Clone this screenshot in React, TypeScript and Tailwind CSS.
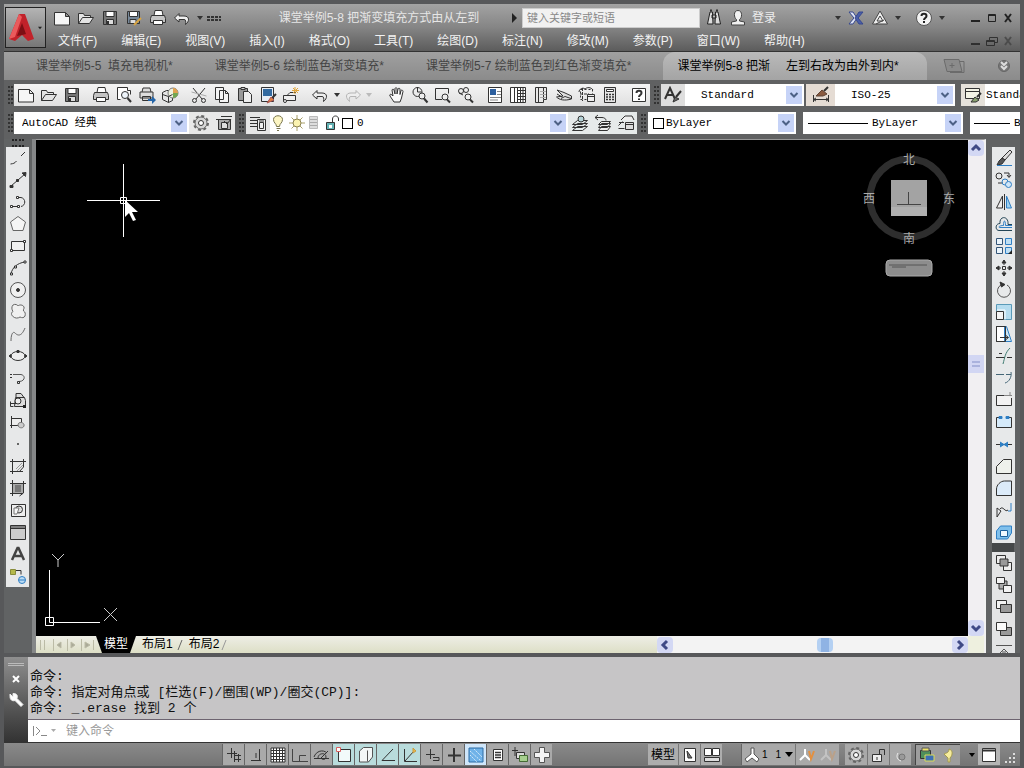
import type { ReactNode } from "react";

const uiFont = "font-['Liberation_Sans','Noto_Sans_CJK_SC',sans-serif]";
const monoFont = "font-['Liberation_Mono','Noto_Sans_CJK_SC',monospace]";

const BLUE = "#2f7fc4";

// every icon is drawn on an 18 x 18 grid
const icons: Record<string, ReactNode> = {
  new: <path d="M1.5 3.5h11l4 4v8.5h-15zM12.5 3.5v4h4" fill="#f6f6f6" />,
  open: <path d="M1.5 14.5v-10h5l1 2h6v2M1.5 14.5l4-6h11l-4 6z" fill="#e4e4e4" />,
  save: (
    <>
      <path d="M2.5 2.5h13v13h-13z" fill="#777" />
      <path d="M5 2.5h8v5H5z" fill="#fff" />
      <path d="M5.5 10.5h7v5h-7z" fill="#ddd" />
      <path d="M7 12v3" strokeWidth="2" />
    </>
  ),
  saveAs: (
    <>
      <path d="M2.5 2.5h12v12h-12z" fill="#789" />
      <path d="M4.5 2.5h8v5h-8z" fill="#fff" />
      <path d="M5 10.5h6v4H5z" fill="#ddd" />
      <path d="M9 16l7-7" stroke="#d9a441" strokeWidth="2" />
    </>
  ),
  print: (
    <>
      <path d="M5 6.5l1-5h7l1 5" fill="#fff" />
      <path d="M2.5 6.5h13l1 3v4h-15v-4z" fill="#c4c4c4" />
      <path d="M4.5 11.5h9v4h-9z" fill="#fff" />
    </>
  ),
  preview: (
    <>
      <path d="M12.5 4.5v-3h-10v12h3M12.5 4.5h3v4" fill="#fff" />
      <circle cx="10" cy="9" r="3.5" fill="#eef4fa" />
      <path d="M12.5 12l3.5 4" strokeWidth="2" />
    </>
  ),
  plot: (
    <>
      <path d="M4 6l1-4h7l1 4M2 6h13v6H2zM4.5 10.5h8v4h-8z" fill="#ddd" />
      <path d="M10 13h4v-3l4 4-4 4v-3h-4z" fill="#2465a8" stroke="none" />
    </>
  ),
  publish: (
    <>
      <path d="M1.5 6.5l4-2h6v10l-4 2-6-3z" fill="#e7e7e7" />
      <circle cx="12" cy="7" r="5" fill="#edf2e0" stroke="#777" />
      <path d="M12 2a5 5 0 0 1 5 5h-5z" fill="#e0a24f" stroke="none" />
      <path d="M17 7a5 5 0 0 1-5 5V7z" fill="#72a850" stroke="none" />
      <path d="M1.5 8.5l6 2v6M7.5 10.5l4-2" />
    </>
  ),
  cut: (
    <>
      <path d="M3 2l9 11M15 2L6 13" />
      <circle cx="4.5" cy="14.5" r="2" />
      <circle cx="13.5" cy="14.5" r="2" />
      <path d="M1.5 6l15 4" stroke="#aaa" />
    </>
  ),
  copy: <path d="M2.5 1.5h8v12h-8zM6.5 4.5h6l3 3v9h-9zM12.5 4.5v3h3" fill="#f4f4f4" />,
  paste: (
    <>
      <path d="M2.5 2.5h9v12h-9z" fill="#999" />
      <path d="M5 1.5h4v2H5z" fill="#ccc" />
      <path d="M7.5 5.5h5l3 3v8h-8z" fill="#eee" />
    </>
  ),
  match: (
    <>
      <path d="M2.5 1.5h12v14h-12z" fill="#e8eef5" />
      <path d="M4 3h9v7H4z" fill="#336aa0" stroke="none" />
      <path d="M17 8l-4 4" strokeWidth="2" />
      <path d="M8 17l4-6 3 3z" fill="#e0823f" stroke="#a55" />
    </>
  ),
  block: (
    <>
      <path d="M1.5 9.5h12v5h-12zM5 9.5l3-3h6" fill="#eee" />
      <path d="M13 1v7M10 4.5h7M11 2l5 5M16 2l-5 5" stroke="#e0a53a" />
      <circle cx="3" cy="15" r="1.5" fill="#fff" />
    </>
  ),
  undo: <path d="M6 4.5L1.5 9 6 13v-2.5h5c2 0 2 2 1.5 5 4-3 4.5-8.5-1.5-8.5H6z" fill="#eee" />,
  redo: <path d="M12 4.5L16.5 9 12 13v-2.5H7c-2 0-2 2-1.5 5C1.5 12 1 7 7 7h5z" fill="#eee" stroke="#b5b5b5" />,
  pan: (
    <path
      d="M6 16L2 10c-1-2 1-2 2-1l1 1-1-6c0-1 2-1 2 0l1 4V2.5c0-1 2-1 2 0V8l1-5c0-1 2-1 2 0v5.5l1-4c1-1 2 0 2 1L13.5 12 12 16z"
      fill="#fafafa"
    />
  ),
  zoomRt: (
    <>
      <circle cx="6.5" cy="6" r="4.5" />
      <path d="M6.5 1v5h4" />
      <circle cx="11" cy="10" r="3" fill="#eee" />
      <path d="M13 12.5l3.5 4" strokeWidth="2" />
    </>
  ),
  zoomWin: (
    <>
      <path d="M8 13.5H1.5v-11h13v5" />
      <circle cx="11" cy="11" r="3" fill="#eee" />
      <path d="M13 13.5l3 3" strokeWidth="2" />
    </>
  ),
  zoomPrev: (
    <>
      <circle cx="4" cy="5" r="2.5" />
      <circle cx="9" cy="4" r="2.5" />
      <path d="M4 8l-2-1M4 8l2 1" />
      <circle cx="11" cy="11" r="3" fill="#eee" />
      <path d="M13 13.5l3 3" strokeWidth="2" />
    </>
  ),
  props: (
    <>
      <path d="M2.5 1.5h13v15h-13z" fill="#fff" />
      <path d="M4 3h6v6H4z" fill="#2d5f9e" stroke="none" />
      <path d="M11 5.5h4M11 8.5h4M4 11.5h11M4 14h8" stroke="#888" />
    </>
  ),
  design: (
    <>
      <path d="M1.5 1.5h15v15h-15z" fill="#fff" />
      <path d="M5.5 1.5v15M8 4.5h8M8 7.5h8M8 10.5h8M8 13.5h8M8.5 2v14M11.5 2v14M14 2v14" />
    </>
  ),
  palettes: (
    <>
      <path d="M3.5 1.5h11v12h-3v3h-8z" fill="#e9e9e9" />
      <path d="M6.500 2v14M11.5 2v11" />
      <path d="M8 5.5h6M8 8.5h6M8 11.5h6" stroke="#aaa" />
    </>
  ),
  sheet: <path d="M1.5 11c3 3 8 4 15 2v-3L9 6.5 2 4l6 6zM6 12.5l4-2 6 2M2 8l5 3" fill="#ddd" />,
  markup: (
    <>
      <path d="M2.5 3.5h12v10h-12z" strokeDasharray="2 2" />
      <path d="M1 6c0-3 4-5 6-3 2-2 6-2 8 1" />
      <path d="M4.5 2v13M2 8h9" strokeDasharray="3 1" />
      <path d="M9.5 8.5h7v7h-7z" fill="#eee" />
      <path d="M9 10.5h7" />
    </>
  ),
  calc: (
    <>
      <path d="M3.5 1.5h11v15h-11z" fill="#e6e6e6" />
      <path d="M5.5 3.5h7v2h-7z" fill="#fff" />
      <path d="M5 8.5h8M5 11h8M5 13.5h8" strokeDasharray="2 1" strokeWidth="1.5" />
    </>
  ),
  help: (
    <>
      <path d="M2.5 2.5h13v13h-13z" fill="#fff" />
      <path d="M6.5 7c0-3 5-3 5 0 0 2-2.5 2-2.5 4M9 12.5v1.5" strokeWidth="2" />
    </>
  ),
  gear: (
    <>
      <circle cx="9" cy="9" r="7" stroke="#666" strokeWidth="2" strokeDasharray="3 2.5" />
      <circle cx="9" cy="9" r="6" fill="#d6d6d6" stroke="#666" />
      <circle cx="9" cy="9" r="2.5" fill="#fff" />
    </>
  ),
  wsSave: (
    <>
      <path d="M3.5 5.5h12v10h-12z" fill="#aaa" />
      <path d="M1 5.5h4M6 2.5h11M6.5 8.5h6v6h-6z" fill="#ddd" />
      <path d="M9 7l3 3 4-5" />
    </>
  ),
  layerProps: (
    <>
      <path d="M1 3.5h10M1 6.5h7M1 9.5h7M1 12.5h7" />
      <path d="M8.5 5.5h8v11h-8z" fill="#eee" />
      <path d="M10.5 8.5h4v6h-4zM10 7h5" />
    </>
  ),
  bulb: <path d="M6.5 12.5c0-3-3-3.500-3-7 0-5 9-5 9 0 0 3.5-3 4-3 7zM6.5 14.5h4M7 16.5h2" fill="#fdf6c4" stroke="#77734e" />,
  sun: (
    <>
      <path d="M9 1v16M1 9h16M3.5 3.5l11 11M14.5 3.5l-11 11" stroke="#a9a06a" />
      <circle cx="9" cy="9" r="4" fill="#fbf3b0" stroke="#8a8150" />
    </>
  ),
  freeze: (
    <>
      <path d="M3.5 2.5h8v12h-8z" fill="#ddd" stroke="#bbb" />
      <path d="M4 5.5h7M4 8.5h7M4 11.5h7" stroke="#aaa" />
    </>
  ),
  unlock: (
    <>
      <path d="M2.5 8.5h8v7h-8z" fill="#62b2b4" />
      <path d="M8.5 8V5c0-4 6-4 6 0v2" />
      <path d="M5 11h3v3H5z" fill="#fff" stroke="none" />
    </>
  ),
  layers: (
    <>
      <path d="M1.5 16.5l5-4h10l-5 4zM1.5 13.5l5-4h10l-5 4zM1.5 10.5l5-4h10l-5 4z" fill="#e5ecec" />
      <circle cx="10" cy="5" r="3" fill="#b5d4d8" />
    </>
  ),
  layerPrev: (
    <>
      <path d="M4.5 16.5l3-4h9l-3 4zM4.5 13.5l3-4h9l-3 4zM4.5 10.500l3-3h9l-3 3z" fill="#eee" />
      <path d="M1 3.5h7c2 0 4 1 4 3M4 1L1 3.5 4 6" />
    </>
  ),
  layerState: (
    <>
      <path d="M1.5 11.5l4-4M1.500 14.5h6M4 6l4-4h7l2 4M2 8.5h5" fill="#eee" />
      <path d="M8.5 8.5h8v7h-8zM8.5 10.5h8" fill="#ddd" />
    </>
  ),
  textStyle: (
    <>
      <path d="M1 13L6 2l5 11M3 9h6" strokeWidth="2" />
      <path d="M17 5l-5 6" strokeWidth="2" />
      <path d="M9 16l2-5 4 2z" fill="#666" />
    </>
  ),
  dimStyle: (
    <>
      <path d="M1.5 9v7M16.5 9v7M2 13.5h14M4 12l-2.5 1.5L4 15M14 12l2.5 1.5L14 15" />
      <path d="M16 1l-4 4" strokeWidth="2" />
      <path d="M4 10l6-6 5 4-4 2z" fill="#8a5a40" stroke="#5e4436" />
    </>
  ),
  tableStyle: (
    <>
      <path d="M1.5 2.5h14v10h-14zM2 5.5h13" fill="#f4f4e6" />
      <path d="M17 7l-4 4" strokeWidth="2" />
      <path d="M7 16l4-5 4 3-3 2z" fill="#89a06f" />
    </>
  ),
  // draw
  line: <path d="M1.5 15c3-.5 4-.5 6-3M12 7l4-4" />,
  xline: (
    <>
      <path d="M2 15L16 3" />
      <path d="M1 14.5h3v2H1zM13 2l4-.5-.5 4zM7.5 8.5h2v2h-2z" fill="#333" />
    </>
  ),
  pline: (
    <>
      <path d="M2 13.5h7M9 4.5h3c5 1 5 8 0 9" />
      <path d="M1.5 12.5h2v2h-2zM8.5 12.5h2v2h-2zM7.5 3.5h2v2h-2z" fill="#fff" />
    </>
  ),
  polygon: <path d="M9 1.5l7.5 5.5-2.5 8.5H4L1.5 7z" fill="#f5f5f5" stroke="#666" />,
  rect: (
    <>
      <path d="M2.5 4.5h13v9h-13z" fill="#f0f0f0" />
      <path d="M14.5 3.5h2v2h-2zM1.5 12.5h2v2h-2z" fill="#fff" />
    </>
  ),
  arc: (
    <>
      <path d="M2 15C3 9 8 4 16 3" />
      <path d="M1.5 14h2v2h-2zM5.5 7h2v2h-2zM15 2h2v2h-2z" fill="#fff" />
    </>
  ),
  circle: (
    <>
      <circle cx="9" cy="9" r="7.5" fill="#f0f0f0" stroke="#555" />
      <circle cx="9" cy="9" r="1.5" fill="#333" />
    </>
  ),
  revcloud: (
    <path
      d="M4 2c2-1.500 5 0 5 1 1-1.500 5-1.500 6 1 .5 2-1 2-.5 4 2 1 2 3 1.500 5-1 2-3 2-5 1-2 1.500-5 1.500-7-.5-2-1.500-2-4 0-5-1.500-2-1.500-5 0-6.500z"
      fill="#f0f0f0"
      stroke="#666"
    />
  ),
  spline: <path d="M2 16C2 9 4 6 6 8s6 5 10-5" stroke="#666" />,
  ellipse: (
    <>
      <ellipse cx="9" cy="9" rx="7" ry="4.5" fill="#eee" />
      <path d="M0 9l2-1.5v3zM18 9l-2-1.5v3zM8 3.5h2v2H8z" fill="#333" />
    </>
  ),
  ellArc: (
    <>
      <path d="M4 5.5h8c5 1 4 7-2 7" stroke="#555" />
      <path d="M1 5.5h2M1 8.5h2M8.5 12.5h2v2h-2z" />
    </>
  ),
  insert: (
    <>
      <path d="M6.5 6.5h9l1 3v6h-11zM7 6V2.500h5l3 4" fill="#ddd" />
      <circle cx="9" cy="10" r="3" fill="#eee" />
      <path d="M1 12.5h6M1.5 10.5v5h3" />
      <path d="M14 14h3v3h-3z" fill="#222" stroke="none" />
    </>
  ),
  mkBlock: (
    <>
      <path d="M2.5 5.5h10v7h-10zM1 12.5h13M2.5 3v12" fill="#eee" />
      <path d="M9 12c0-4 7-3 6 1-1 3-6 2-6-1z" fill="#ccc" stroke="#777" />
    </>
  ),
  point: <path d="M9 8v2M8 9h2" strokeWidth="2" stroke="#666" />,
  hatch: (
    <>
      <path d="M1 4.5h16M1 14.5h13M3.5 2v15M14.5 2v8l-4 4.5" />
      <path d="M7 12l6-6M8 14l6-6" stroke="#999" />
    </>
  ),
  gradient: (
    <>
      <path d="M4 4h10v10H4z" fill="#aaa" stroke="none" />
      <path d="M6 6h6v7H6z" fill="#777" stroke="none" />
      <path d="M1 4.5h16M1 14.5h13M3.5 1v16M14.5 2v12l-4 3" />
    </>
  ),
  region: (
    <>
      <path d="M2.5 3.5h14v12h-14z" fill="#eee" />
      <circle cx="10" cy="8.5" r="3.5" fill="#ddd" />
      <path d="M5 13V7h5l-2 6z" fill="#f8f8f8" stroke="#777" />
    </>
  ),
  table: <path d="M1.5 2.5h15v14h-15zM1.5 5.5h15M2 4h14" fill="#ccc" />,
  mtext: <path d="M3 15L8.5 3h1L15 15M5 11h8" strokeWidth="2.5" stroke="#444" />,
  addSel: (
    <>
      <path d="M1.5 2.5h5v5h-5z" fill="#b5b94c" stroke="#888c3c" />
      <path d="M7 3.5h5v4" />
      <circle cx="13" cy="13" r="3.5" fill="#bcdcf5" stroke={BLUE} />
      <path d="M10 13h6" stroke={BLUE} />
    </>
  ),
  // modify
  erase: (
    <>
      <path d="M15 1l2 2-7 8-3-2z" fill="#ddd" />
      <path d="M7 9l3 2-3 4-5 1 2-4z" fill="#555" />
      <path d="M2 16.5h15" stroke={BLUE} />
    </>
  ),
  copyObj: (
    <>
      <circle cx="4" cy="5" r="3" />
      <path d="M9 2h5v4M12 4l2 2.5L16 4M3 12h5" />
      <circle cx="10" cy="11" r="3" stroke={BLUE} />
      <circle cx="13.5" cy="13.5" r="3" fill="#cfe6f8" stroke={BLUE} />
    </>
  ),
  mirror: (
    <>
      <path d="M7.5 3v12H1.5z" fill="#eee" />
      <path d="M11.5 3v12h5z" fill="#9ed0ee" stroke={BLUE} />
      <path d="M9.5 1v16" />
    </>
  ),
  offset: (
    <>
      <path d="M17 9.5h-4c1-9-9-9-8-1-5 0-5 7-1 7h13" stroke="#245" />
      <path d="M17 12.5H4.5c-1 0-1-2 4-2 0-6 2-6 2 0H17" stroke={BLUE} />
    </>
  ),
  array: (
    <>
      <path d="M1.5 1.5h6v6h-6zM1.5 10.5h6v6h-6z" fill="#eaf4fb" stroke="#357" />
      <path d="M10.5 1.5h6v6h-6zM10.5 10.5h6v6h-6z" fill="#bfe0f5" stroke={BLUE} />
      <path d="M17 13v4h-4z" fill="#222" stroke="none" />
    </>
  ),
  move: (
    <>
      <path d="M9 1v5M9 12v5M1 9h5M12 9h5M7.5 7.5h3v3h-3z" />
      <path d="M9 1L7 4h4zM9 17l-2-3h4zM1 9l3-2v4zM17 9l-3-2v4z" fill="#333" />
    </>
  ),
  rotate: (
    <>
      <path d="M6 4a6.5 6.5 0 1 0 6 0" stroke="#555" />
      <path d="M5 1l5 2.5L6.5 6z" fill="#333" />
    </>
  ),
  scale: (
    <>
      <path d="M1.5 1.5h15v15h-15z" fill="#b5dcef" stroke="#5a9ab8" />
      <path d="M1.5 8.5h7v8h-7z" fill="#f4f4f4" />
      <path d="M10 16.500V7H2" stroke="#fff" />
    </>
  ),
  stretch: (
    <>
      <path d="M1.5 1.5h8v15h-8z" fill="#fff" />
      <path d="M9.5 1.5h2l5 15h-7z" fill="#cde7f6" stroke={BLUE} />
      <path d="M1.5 1.500h9v15h-9z" />
      <path d="M5 12.5h8M11 10.5l2.5 2-2.5 2" />
    </>
  ),
  trim: (
    <>
      <path d="M1 10.5h9M12 10.5h5M4 6.5h3" />
      <path d="M15 1C10 6 10 10 8 17" stroke="#3f7c72" />
    </>
  ),
  extend: <path d="M1 5.5h8M11 5.5h5M16 3c1 5-2 10-6 11" stroke="#467" />,
  breakPt: (
    <>
      <path d="M13 4.5H1.5v10h15V7" fill="#f2f2f2" />
      <path d="M9 4.5h8M15 1v4" stroke="#888" />
    </>
  ),
  breakObj: (
    <>
      <path d="M5 4.500H1.5v10h15v-10H13" fill="#d5eafa" />
      <path d="M4 3.5h3v2H4zM11 3.5h3v2h-3z" fill={BLUE} stroke={BLUE} />
    </>
  ),
  join: (
    <>
      <path d="M1 9.5h16" />
      <path d="M5 7l4 2.5L5 12M13 7L9 9.500l4 2.500" fill={BLUE} stroke={BLUE} />
    </>
  ),
  chamfer: <path d="M1.5 16.5V9.5l7-7h8v14z" fill="#eef1ec" />,
  fillet: <path d="M1.5 16.5V10c0-4 4-8 8-8h7v14.5z" fill="#dcebf9" />,
  blend: (
    <>
      <path d="M2 16V7l4 3zM5 8c3-4 5 4 8 1" />
      <path d="M16 2v8h-3" stroke={BLUE} />
    </>
  ),
  explode: (
    <>
      <path d="M1.5 8l4-5h11v7l-4 6h-11z" fill="#7fc0ec" stroke={BLUE} />
      <path d="M5.5 7.5h7v6h-7z" fill="#f0f8ff" stroke="#1c5f9c" />
    </>
  ),
  front: (
    <>
      <path d="M1.5 1.5h9v8h-9zM8.5 8.5h8v8h-8z" fill="#eee" />
      <path d="M5 5h8v7H5z" fill="#999" />
    </>
  ),
  back: (
    <>
      <path d="M4 5h8v8H4z" fill="#aaa" />
      <path d="M1.5 1.5h8v6h-8zM8.5 9.5h8v7h-8z" fill="#f3f3f3" />
    </>
  ),
  above: (
    <>
      <path d="M1.5 2.5h10v8h-10z" fill="#f3f3f3" />
      <path d="M5.500 6.500h11v8h-11z" fill="#999" />
    </>
  ),
  under: (
    <>
      <path d="M5.500 7.500h11v8h-11z" fill="#999" />
      <path d="M1.5 2.5h10v8h-10z" fill="#fbfbfb" />
    </>
  ),
  textFront: <path d="M1 3.5h16M4 12l5-5 5 5M7 10h4" stroke="#555" />,
  // status
  snap: <path d="M6.5 2v10M2 7.5h10M10 9.5h6M9.5 5v11M9 13.5h7M13.5 8v8" />,
  infer: <path d="M12.5 3v11M4 14.5h10M9 7v5" />,
  grid: (
    <>
      <path d="M2 2h14v14H2z" fill="#fff" />
      <path d="M2 4.5h14M2 7.5h14M2 10.5h14M2 13.5h14M4.5 2v14M7.5 2v14M10.5 2v14M13.5 2v14" />
    </>
  ),
  ortho: <path d="M1.5 3v12.5H17M8.5 15V9.5H15" stroke="#444" />,
  polar: (
    <>
      <path d="M1 11c2-6 9-8 13-4M5 12c0-5 8-6 8-1 0 3-4 3-5 1l7-7" />
      <path d="M1 12.5h15" />
    </>
  ),
  osnap: (
    <>
      <path d="M3.5 3.5h12v12h-12z" fill="#f2fafa" />
      <path d="M1.5 1.5h4v4h-4z" fill="#fff" stroke="#d96060" />
    </>
  ),
  osnap3d: <path d="M2.5 5l4-3.5h9V11l-4 5h-9zM11.500 16l-1-1V4.500" fill="#f4f8f8" stroke="#555" />,
  otrack: <path d="M14 3L3 14.5h13" />,
  ducs: (
    <>
      <path d="M3.5 3v12.5H16M4 15L13 5" />
      <path d="M12 2l3 3-3 2z" fill="#e8b64a" stroke="#c99c40" />
    </>
  ),
  dyn: <path d="M7.5 3v10M3 8.5h9M10 11.5h6M10 14.5h6v-3" />,
  lwt: <path d="M9 2v14M3 9.5h13" strokeWidth="2" />,
  tpy: (
    <>
      <path d="M2 2h14v14H2z" fill="#6fb2e8" stroke="#2e6da4" />
      <path d="M3 5l11 10M3 9l7 7M7 3l8 8" stroke="#d5ebfb" strokeDasharray="2 1" />
    </>
  ),
  qp: (
    <>
      <path d="M4.5 3.5h9v11h-9z" fill="#fff" />
      <path d="M6 6.5h6M6 9h6M6 11.5h6" strokeWidth="1.5" />
    </>
  ),
  sc: (
    <>
      <path d="M4 1v9M1 4.5h6" />
      <path d="M5.5 6.5h8v6h-8z" fill="#ddd" />
      <path d="M8.5 9.5h8v6h-8z" fill="#a6cf8e" stroke="#456b35" />
    </>
  ),
  am: <path d="M6.5 1.5h5v5h5v5h-5v5h-5v-5h-5v-5h5z" fill="#f3f3f3" stroke="#555" />,
  layout: (
    <>
      <path d="M3.5 2.5h11v13h-11z" fill="#fff" />
      <path d="M6 5l5 7H7z" fill="#777" />
    </>
  ),
  quickView: (
    <>
      <path d="M1.5 2.5h7v7h-7zM9.5 2.5h7v7h-7z" fill="#fff" />
      <path d="M1.5 11.5h15v4h-15z" fill="#ddd" />
    </>
  ),
  anno: <path d="M8 2h3v6l5 5-2 3-5-4-5 4-2-3 6-5z" fill="#fff" stroke="#555" />,
  annoAuto: (
    <>
      <path d="M7 3v6l-5 5M7 9l5 5" stroke="#fff" strokeWidth="2" />
      <path d="M11 5l2 8 3-8" stroke="#e39040" strokeWidth="2" />
    </>
  ),
  lock: (
    <>
      <path d="M2.5 8.5h9v7h-9z" fill="#eee" />
      <path d="M9.5 8V3.5h5V9M7 11v3" />
    </>
  ),
  isolate: (
    <>
      <circle cx="10" cy="11" r="3" fill="#999" stroke="#777" />
      <path d="M6 7c-2 3-1 7 3 8" stroke="#eee" />
    </>
  ),
  hw: (
    <>
      <path d="M2.5 4.5h10v8h-10z" fill="#4f8f5b" />
      <path d="M7 9h9v6H7z" fill="#3d70b4" stroke="#dd5" />
      <path d="M4 2h7v3H4z" fill="#eee36a" stroke="#555" />
    </>
  ),
  tip: <path d="M8 16v-4L4 8c2-1 5-1 5-5 4 1 4 6 1 9v4z" fill="#f6ec9d" stroke="#a39a4e" />,
  clean: (
    <>
      <path d="M2.5 2.5h13v13h-13z" fill="#fff" />
      <path d="M2.5 4.5h13" strokeWidth="2" />
    </>
  ),
  wrench: <path d="M3 3l3 3V2.5c4 0 5 2 4 5l6 6-2 2-6-6c-3 1-5-1-5-4z" fill="#fff" stroke="#eee" />,
  binoculars: (
    <>
      <path d="M5 3h2.5l.5 12H2.5zM10.5 3H13l2.5 12H10zM7 6h4v3H7z" fill="#ddd" stroke="#222" />
      <path d="M5 1.5h2M11 1.5h2" strokeWidth="2" />
    </>
  ),
  user: <path d="M9 1.5c5 0 4 8 1.5 9v1.5l5 1v3h-13v-3l5-1V10.5C5 9 4 1.5 9 1.5z" fill="#f1f1f1" stroke="#444" />,
  exchange: (
    <>
      <path d="M2 3l5 6-5 6h4l4-6-4-6z" fill="#dfe4f5" stroke="#36488f" />
      <path d="M16 3l-5 6 5 6h-4L8 9l4-6z" fill="#4a5ea8" stroke="#36488f" />
    </>
  ),
  a360: <path d="M9 2L1.5 15h15zM9 7l-3 5h6zM5 15l8-4" fill="#eee" stroke="#444" />,
  helpRound: (
    <>
      <circle cx="9" cy="9" r="7.5" fill="#f2f2f2" stroke="#555" />
      <path d="M6.5 7c0-3 5-3 5 0 0 2-2.5 2-2.5 4M9 12v2" stroke="#222" strokeWidth="2" />
    </>
  ),
};

function Icon({ name }: { name: string }) {
  return (
    <svg className="block h-[18px] w-[18px] shrink-0" viewBox="0 0 18 18" fill="none" stroke="#333" aria-hidden="true">
      {icons[name]}
    </svg>
  );
}

function Tool({ name, className = "h-[22px] w-[23px]" }: { name: string; className?: string }) {
  return (
    <button type="button" aria-label={name} className={`flex shrink-0 items-center justify-center ${className}`}>
      <Icon name={name} />
    </button>
  );
}

function Caret({ className = "w-3 text-[#333]" }: { className?: string }) {
  return (
    <svg className={`h-2 shrink-0 ${className}`} viewBox="0 0 12 8" aria-hidden="true">
      <path d="M3 2h6L6 6z" fill="currentColor" />
    </svg>
  );
}

function Combo(props: { label: string; value: string; className: string; pad?: string; arrow?: boolean; children?: ReactNode }) {
  const { label, value, className, pad = "pl-2", arrow = true, children } = props;
  return (
    <label className={`flex h-[22px] items-center bg-white ${className}`}>
      {children}
      <select
        aria-label={label}
        className={`h-full min-w-0 flex-1 appearance-none bg-transparent text-[11px] text-black outline-none ${pad} ${monoFont}`}
      >
        <option>{value}</option>
      </select>
      {arrow && (
        <svg className="mr-[2px] h-[18px] w-4 shrink-0 bg-[#c6d3f7]" viewBox="0 0 16 18" fill="none" aria-hidden="true">
          <path d="M4.5 7l3.5 3.5L11.5 7" stroke="#4d6185" strokeWidth="2" />
        </svg>
      )}
    </label>
  );
}

function Gripper() {
  return <div className="h-[18px] w-[5px] shrink-0 self-center border-x-2 border-dotted border-[#333]" />;
}

const menus = [
  "文件(F)",
  "编辑(E)",
  "视图(V)",
  "插入(I)",
  "格式(O)",
  "工具(T)",
  "绘图(D)",
  "标注(N)",
  "修改(M)",
  "参数(P)",
  "窗口(W)",
  "帮助(H)",
];

const standardTools = [
  ["new", "open", "save"],
  ["print", "preview", "plot", "publish"],
  ["cut", "copy", "paste", "match", "block"],
];
const viewTools = ["pan", "zoomRt", "zoomWin", "zoomPrev"];
const paletteTools = ["props", "design", "palettes", "sheet", "markup", "calc"];
const drawTools = [
  "line", "xline", "pline", "polygon", "rect", "arc", "circle", "revcloud", "spline", "ellipse",
  "ellArc", "insert", "mkBlock", "point", "hatch", "gradient", "region", "table", "mtext", "addSel",
];
const modifyTools = [
  "erase", "copyObj", "mirror", "offset", "array", "move", "rotate", "scale", "stretch",
  "trim", "extend", "breakPt", "breakObj", "join", "chamfer", "fillet", "blend", "explode",
];
const orderTools = ["front", "back", "above", "under", "textFront"];
const statusTools = [
  "snap", "infer", "grid", "ortho", "polar", "osnap", "osnap3d", "otrack", "ducs",
  "dyn", "lwt", "tpy", "qp", "sc", "am",
];
const activeStatus = ["osnap", "osnap3d", "otrack", "ducs"];

function WindowControls({ dim = false }: { dim?: boolean }) {
  return (
    <div className={`flex ${dim ? "opacity-80" : ""}`}>
      <button type="button" aria-label="最小化" className="flex h-4 w-4 items-center justify-center">
        <svg className="h-3 w-3" viewBox="0 0 12 12" stroke="#222"><path d="M1 9h9" strokeWidth="2" /></svg>
      </button>
      <button type="button" aria-label="还原" className="flex h-4 w-4 items-center justify-center">
        <svg className="h-3 w-3" viewBox="0 0 12 12" stroke="#222" fill="none">
          {dim ? <path d="M3.5 5V2.5h8v5H9M.5 5.5h8v5h-8zM.5 6.5h8" /> : <path d="M2.5 2.5h7v7h-7zM2.5 3.5h7" />}
        </svg>
      </button>
      <button type="button" aria-label="关闭" className="flex h-4 w-4 items-center justify-center">
        <svg className="h-3 w-3" viewBox="0 0 12 12" stroke={dim ? "#444" : "#222"}>
          <path d="M3 2l6 8M9 2l-6 8" strokeWidth="2" />
        </svg>
      </button>
    </div>
  );
}

function TitleBar() {
  return (
    <header className="flex h-12 shrink-0 border-b border-[#333] bg-linear-to-b from-[#a3a3a3] via-[#858585] to-[#5c5c5c]">
      <button
        type="button"
        aria-label="应用程序菜单"
        className="mt-[3px] ml-px flex h-[41px] w-[41px] shrink-0 items-center border border-[#222] bg-linear-to-b from-[#b4b4b4] to-[#777]"
      >
        <svg className="ml-[2px] h-[30px] w-[28px]" viewBox="0 0 28 30" aria-hidden="true">
          <path d="M11 1h6l9 25-6 2-6-6-7 6-6-2z" fill="#c1222a" />
          <path d="M11 1L1 26l6-2 7-20z" fill="#ea5a5c" />
          <path d="M14 10l4 11-4 1-5 1z" fill="#7d0f14" />
        </svg>
        <Caret className="w-2 text-[#222]" />
      </button>
      <div className="flex min-w-0 flex-1 flex-col">
        <div className="flex h-[27px] items-center pr-1 pl-1">
          {["new", "open", "save", "saveAs", "print", "undo"].map((name) => (
            <Tool key={name} name={name} className="h-6 w-6" />
          ))}
          <Caret />
          <svg className="h-3 w-4 shrink-0" viewBox="0 0 16 12" stroke="#333" aria-hidden="true">
            <path d="M1 5h14M1 8h14" strokeDasharray="3 1" strokeWidth="2" />
          </svg>
          <h1 className="flex-1 truncate pl-7 text-center text-xs text-[#e6e6e6]">课堂举例5-8 把渐变填充方式由从左到</h1>
          <svg className="h-3 w-[14px] shrink-0" viewBox="0 0 14 12" aria-hidden="true">
            <path d="M4 1l5 5-5 5z" fill="#222" />
          </svg>
          <input
            type="text"
            aria-label="搜索"
            placeholder="键入关键字或短语"
            className="h-5 w-[178px] shrink-0 border border-[#ccc] bg-[#f1f1f1] px-1 text-[11px] placeholder:text-[#888]"
          />
          <Tool name="binoculars" className="ml-[2px] h-6 w-6" />
          <Tool name="user" className="h-6 w-6" />
          <button type="button" className="mr-14 ml-[2px] shrink-0 text-xs text-[#ededed]">登录</button>
          <Caret />
          <Tool name="exchange" className="h-6 w-6" />
          <Tool name="a360" className="h-6 w-6" />
          <Caret />
          <Tool name="helpRound" className="ml-2 h-6 w-6" />
          <Caret className="mr-5 w-3 text-[#333]" />
          <WindowControls />
        </div>
        <nav className="flex h-5 items-center gap-6 pr-1 pl-3 text-xs text-[#f2f2f2]">
          {menus.map((menu) => (
            <button key={menu} type="button" className="shrink-0">{menu}</button>
          ))}
          <div className="ml-auto">
            <WindowControls dim />
          </div>
        </nav>
      </div>
    </header>
  );
}

function DocumentTabs() {
  return (
    <div className="flex h-7 shrink-0 items-center bg-linear-to-b from-[#a0a0a0] to-[#8b8b8b] pl-8 text-xs text-[#444]">
      <button type="button" className="shrink-0">课堂举例5-5&nbsp; 填充电视机*</button>
      <button type="button" className="ml-[42px] shrink-0">课堂举例5-6 绘制蓝色渐变填充*</button>
      <button type="button" className="ml-[42px] shrink-0">课堂举例5-7 绘制蓝色到红色渐变填充*</button>
      <button
        type="button"
        className="ml-8 flex h-full shrink-0 items-center gap-4 rounded-t-xl bg-linear-to-b from-[#bababa] to-[#a4a4a4] pr-7 pl-[14px] text-black"
      >
        <span>课堂举例5-8 把渐</span>
        <span>左到右改为由外到内*</span>
      </button>
      <svg className="ml-4 h-4 w-6 shrink-0" viewBox="0 0 24 16" fill="none" stroke="#6b6b6b" aria-hidden="true">
        <path d="M1 1.5h15l3 12H4z" fill="#8b8b8b" />
        <path d="M17 3.5h4v11H7M9 5v5M6.5 7.5h5" />
      </svg>
      <svg className="mr-[10px] ml-auto h-4 w-3 shrink-0" viewBox="0 0 12 16" fill="none" stroke="#ddd" aria-hidden="true">
        <circle cx="6" cy="8" r="5.5" fill="#777" stroke="#666" />
        <path d="M3 4l3 3 3-3M3 8l3 3 3-3" strokeWidth="2" />
      </svg>
    </div>
  );
}

function Toolbars() {
  return (
    <div className="flex shrink-0 flex-col gap-[6px] overflow-hidden bg-[#606162] pt-1 pb-[5px] pl-1">
      <div className="flex h-[22px]">
        <Gripper />
        <div className="ml-px flex shrink-0 bg-linear-to-b from-[#f4f4f4] to-[#e0e0e0]">
          {standardTools.map((group) => (
            <div key={group[0]} className="mr-[6px] flex">
              {group.map((name) => (
                <Tool key={name} name={name} />
              ))}
            </div>
          ))}
          <Tool name="undo" />
          <div className="flex w-3 items-center"><Caret /></div>
          <Tool name="redo" className="h-[22px] w-5" />
          <div className="mr-2 flex w-[14px] items-center"><Caret className="w-3 text-[#bbb]" /></div>
          <div className="mr-[6px] flex">
            {viewTools.map((name) => (
              <Tool key={name} name={name} />
            ))}
          </div>
          {paletteTools.map((name) => (
            <Tool key={name} name={name} />
          ))}
          <div className="w-[6px]" />
          <Tool name="help" />
        </div>
        <div className="ml-1 flex"><Gripper /></div>
        <div className="ml-[2px] flex min-w-0 flex-1">
          <Tool name="textStyle" className="h-[22px] w-6 bg-[#dedede]" />
          <Combo label="文字样式" value="Standard" className="w-[119px] shrink-0" pad="pl-4" />
          <Tool name="dimStyle" className="ml-[2px] h-[22px] w-[29px] bg-[#e5dcd4]" />
          <Combo label="标注样式" value="ISO-25" className="w-[120px] shrink-0" pad="pl-4" />
          <Tool name="tableStyle" className="ml-[6px] h-[22px] w-6 bg-[#e5e1da]" />
          <Combo label="表格样式" value="Standard" className="min-w-0 flex-1" pad="pl-px" arrow={false} />
        </div>
      </div>
      <div className="flex h-[22px]">
        <Gripper />
        <Combo label="工作空间" value="AutoCAD 经典" className="ml-px w-[175px] shrink-0" />
        <div className="flex shrink-0 bg-[#e8e8e8]">
          <Tool name="gear" />
          <Tool name="wsSave" />
        </div>
        <div className="ml-1 flex"><Gripper /></div>
        <Tool name="layerProps" className="ml-[2px] h-[22px] w-6 bg-[#e5e5e5]" />
        <Combo label="图层" value="0" className="w-[298px] shrink-0" pad="pl-1">
          <span className="flex shrink-0 items-center">
            <Icon name="bulb" />
            <Icon name="sun" />
            <Icon name="freeze" />
            <Icon name="unlock" />
            <span className="h-[11px] w-[11px] border border-black" />
          </span>
        </Combo>
        <div className="flex shrink-0 bg-[#e6eaea]">
          <Tool name="layers" />
          <Tool name="layerPrev" />
          <Tool name="layerState" />
        </div>
        <div className="ml-1 flex"><Gripper /></div>
        <Combo label="颜色" value="ByLayer" className="ml-[2px] w-[148px] shrink-0" pad="pl-[2px]">
          <span className="ml-[5px] h-[11px] w-[11px] shrink-0 border border-black" />
        </Combo>
        <Combo label="线型" value="ByLayer" className="ml-[7px] w-[160px] shrink-0" pad="pl-1">
          <span className="ml-[5px] h-px w-[60px] shrink-0 bg-black" />
        </Combo>
        <Combo label="线宽" value="ByLayer" className="ml-[7px] min-w-0 flex-1" pad="pl-1" arrow={false}>
          <span className="ml-1 h-px w-9 shrink-0 bg-black" />
        </Combo>
      </div>
    </div>
  );
}

function DrawingCanvas() {
  return (
    <div className="relative min-w-0 flex-1 overflow-hidden bg-black">
      <svg className="absolute top-6 left-[50px] h-[74px] w-[75px]" viewBox="0 0 75 74" fill="none" stroke="#fff">
        <path d="M1 36.5h73M37.5 0v73M34.5 33.5h6v6h-6z" />
        <path d="M39 36v17l4-4 4 8 3-1-4-8h6z" fill="#fff" stroke="none" />
      </svg>
      <svg className="absolute bottom-0 left-2 h-[86px] w-[78px]" viewBox="0 0 78 86" fill="none" stroke="#fff">
        <path d="M5.5 20v52.5H56M1.5 67.5h8v8h-8z" />
        <path d="M8 4l6 6 6-6M14 10v7M60 58l13 13M73 58L60 71" stroke="#ccc" />
      </svg>
      <svg className="absolute top-2 right-3 h-[132px] w-[94px]" viewBox="0 0 94 132">
        <circle cx="47" cy="50" r="39" fill="none" stroke="#2e2e2e" strokeWidth="7" />
        <path d="M29 32h36v36H29z" fill="#a3a3a3" />
        <path d="M29 59h36v9H29z" fill="#b0b0b0" />
        <path d="M46.5 44v12M35 56.5h24" stroke="#444" />
        <g fill="#aaa" fontSize="12" textAnchor="middle" fontFamily="'Noto Sans CJK SC', sans-serif">
          <text x="47" y="16">北</text>
          <text x="47" y="95">南</text>
          <text x="7" y="55">西</text>
          <text x="87" y="55">东</text>
        </g>
        <rect x="24" y="112" width="46" height="16" rx="4" fill="#8d8d8d" stroke="#aaa" />
        <path d="M27 117h38M30 119h14" stroke="#555" />
      </svg>
    </div>
  );
}

function ScrollArrow({ d, label }: { d: string; label: string }) {
  return (
    <button type="button" aria-label={label} className="flex h-4 w-4 shrink-0 items-center justify-center rounded-sm bg-[#d3d8f4]">
      <svg className="h-3 w-3" viewBox="0 0 12 12" fill="none" stroke="#3f4a86">
        <path d={d} strokeWidth="3" />
      </svg>
    </button>
  );
}

function LayoutBar() {
  return (
    <div className="flex h-[17px] shrink-0 items-center bg-[#f3f3f3] text-xs text-black">
      <div className="flex h-full flex-[2] items-center bg-linear-to-b from-[#eeeee6] to-[#dddfc6]">
        <svg className="h-[14px] w-[60px] shrink-0" viewBox="0 0 60 14" fill="#aaaa98" stroke="#bbbba6" aria-hidden="true">
          <path d="M4.5 2v10M8.5 2v10M17.5 1v12M31.5 1v12M45.5 1v12M57.5 2v10" fill="none" />
          <path d="M25 4v6l-4-3zM35 4v6l4-3zM49 4v6l5-3z" />
        </svg>
        <svg className="h-full w-2 shrink-0" viewBox="0 0 8 17" preserveAspectRatio="none"><path d="M0 0h8v17H6z" /></svg>
        <button type="button" className="h-full bg-black leading-[17px] text-white">模型</button>
        <svg className="h-full w-2 shrink-0" viewBox="0 0 8 17" preserveAspectRatio="none"><path d="M0 0h8L2 17H0z" /></svg>
        <button type="button" className="ml-[6px] leading-[17px]">布局1</button>
        <svg className="h-3 w-4 shrink-0" viewBox="0 0 16 12" stroke="#666"><path d="M5 11l4-10" /></svg>
        <button type="button" className="leading-[17px]">布局2</button>
        <svg className="h-3 w-4 shrink-0" viewBox="0 0 16 12" stroke="#999"><path d="M3 11l4-10" /></svg>
      </div>
      <div className="flex h-full flex-1 items-center">
        <ScrollArrow label="向左滚动" d="M8 2L4 6l4 4" />
        <div className="flex h-full flex-1 items-center justify-center pl-6">
          <div className="h-[14px] w-4 rounded-sm border-x-4 border-[#b4d0f2] bg-[#8fb3e4]" />
        </div>
        <ScrollArrow label="向右滚动" d="M4 2l4 4-4 4" />
      </div>
      <div className="h-full w-4 shrink-0 bg-[#eef0df]" />
    </div>
  );
}

function Workspace() {
  return (
    <main className="flex min-h-0 flex-1 bg-[#616364]">
      <aside className="w-8 shrink-0 overflow-hidden border-r-4 border-[#858788] px-[2px]">
        <div className="mx-auto h-2 w-3 border-y-2 border-dotted border-[#222]" />
        <div className="flex w-[23px] flex-col bg-[#e7e8e9]">
          {drawTools.map((name) => (
            <Tool key={name} name={name} />
          ))}
        </div>
      </aside>
      <section className="flex min-w-0 flex-1 flex-col border-t border-r-2 border-t-[#999] border-r-[#f2f2f2]">
        <div className="flex min-h-0 flex-1">
          <DrawingCanvas />
          <div className="flex w-4 shrink-0 flex-col bg-[#f1eff2]">
            <ScrollArrow label="向上滚动" d="M2 8l4-4 4 4" />
            <div className="flex flex-1 flex-col justify-center">
              <div className="h-[18px] bg-[#d2d6f3] px-1 pt-[6px]">
                <div className="h-[6px] border-y-2 border-[#aab2dd]" />
              </div>
              <div className="h-12" />
            </div>
            <ScrollArrow label="向下滚动" d="M2 4l4 4 4-4" />
          </div>
        </div>
        <LayoutBar />
      </section>
      <aside className="flex w-[34px] shrink-0 flex-col overflow-hidden px-[6px] pt-2">
        <div className="flex w-[23px] shrink-0 flex-col bg-[#e7e9ea]">
          {modifyTools.map((name) => (
            <Tool key={name} name={name} />
          ))}
        </div>
        <div className="h-[9px] shrink-0 bg-[#454849]" />
        <div className="flex min-h-0 w-[23px] flex-1 flex-col overflow-hidden bg-[#e3e4e5]">
          {orderTools.map((name) => (
            <Tool key={name} name={name} />
          ))}
        </div>
      </aside>
    </main>
  );
}

function CommandPanel() {
  return (
    <section className="mt-1 flex shrink-0 border-b border-[#333] bg-[#c6c5c6]">
      <div className="flex w-6 shrink-0 flex-col items-center bg-linear-to-b from-[#8f8f8f] to-[#333]">
        <div className="mt-[6px] mb-2 h-[3px] w-4 border-y border-[#bbb]" />
        <button type="button" aria-label="关闭命令行">
          <svg className="h-[10px] w-[10px]" viewBox="0 0 10 10" stroke="#fff" strokeWidth="2"><path d="M2 2l6 6M8 2L2 8" /></svg>
        </button>
        <Tool name="wrench" className="mt-1 h-6 w-6" />
      </div>
      <div className="flex min-w-0 flex-1 flex-col">
        <div className={`h-[62px] px-[2px] pt-3 text-[13px] leading-4 text-[#111] ${monoFont}`}>
          <p>命令:</p>
          <p>命令: 指定对角点或 [栏选(F)/圈围(WP)/圈交(CP)]:</p>
          <p>命令: _.erase 找到 2 个</p>
        </div>
        <label className="flex h-[23px] items-center border-t border-[#6d6470] bg-white">
          <svg className="ml-1 h-3 w-7 shrink-0" viewBox="0 0 28 12" fill="none" stroke="#888">
            <path d="M1.5 1v10M4 2l4 4-4 4M9 10.5h6" />
            <path d="M19 4h5l-2.5 3z" fill="#aaa" stroke="none" />
          </svg>
          <input
            type="text"
            aria-label="命令输入"
            placeholder="键入命令"
            className="ml-[6px] h-full min-w-0 flex-1 bg-transparent text-xs outline-none placeholder:text-[#999]"
          />
        </label>
      </div>
    </section>
  );
}

function statusColor(name: string) {
  if (activeStatus.includes(name)) return "bg-[#b9dcdc]";
  if (name === "tpy") return "bg-[#cfe6fa]";
  return "bg-[#a9a9a9]";
}

function StatusBar() {
  return (
    <footer className="flex h-[23px] shrink-0 items-center bg-linear-to-b from-[#8a8a8a] to-[#747474] pr-1 text-xs text-black">
      <div className="ml-[218px] flex shrink-0">
        {statusTools.map((name) => (
          <Tool key={name} name={name} className={`h-[21px] w-[22px] border-l border-[#666] ${statusColor(name)}`} />
        ))}
      </div>
      <div className="ml-auto flex shrink-0 items-center">
        <div className="mr-[19px] flex bg-[#adadad]">
          <button type="button" className="h-[21px] w-[30px]">模型</button>
          <Tool name="layout" className="h-[21px] w-[22px] border-l border-[#777]" />
          <Tool name="quickView" className="h-[21px] w-[22px] border-l border-[#777]" />
        </div>
        <div className="mr-[6px] flex items-center bg-[#a9a9a9]">
          <button type="button" className="flex h-[21px] w-[54px] items-center border-l border-[#666] pl-px">
            <Icon name="anno" />
            <span className="flex gap-2 pl-px text-[10px]"><span>1</span><span>1</span></span>
            <svg className="ml-[2px] h-3 w-3 shrink-0" viewBox="0 0 12 12" aria-hidden="true"><path d="M2 3h8L6 8z" /></svg>
          </button>
          <Tool name="annoAuto" className="h-[21px] w-[22px] border-l border-[#777]" />
          <Tool name="annoAuto" className="h-[21px] w-[22px] opacity-30" />
        </div>
        <div className="mr-1 flex bg-[#a9a9a9]">
          <Tool name="gear" className="h-[21px] w-[22px]" />
          <Tool name="lock" className="h-[21px] w-[22px] border-l border-[#777]" />
          <Tool name="isolate" className="h-[21px] w-[22px] border-l border-[#777]" />
        </div>
        <div className="mr-[6px] flex border-t border-l border-[#444] bg-[#9d9d9d]">
          <Tool name="hw" className="h-5 w-[22px]" />
          <Tool name="tip" className="h-5 w-[22px]" />
        </div>
        <Caret className="w-3 text-black" />
        <Tool name="clean" className="h-[21px] w-[22px] bg-[#b5b5b5]" />
        <svg className="ml-1 h-3 w-3 self-end" viewBox="0 0 12 12" fill="#ddd" aria-hidden="true">
          <path d="M9 0h2v2H9zM9 4h2v2H9zM9 8h2v2H9zM5 4h2v2H5zM5 8h2v2H5zM1 8h2v2H1z" />
        </svg>
      </div>
    </footer>
  );
}

export default function App() {
  return (
    <div className={`flex h-screen w-full flex-col overflow-hidden bg-[#57585a] px-1 pt-1 pb-[2px] ${uiFont}`}>
      <TitleBar />
      <DocumentTabs />
      <Toolbars />
      <Workspace />
      <CommandPanel />
      <StatusBar />
    </div>
  );
}
